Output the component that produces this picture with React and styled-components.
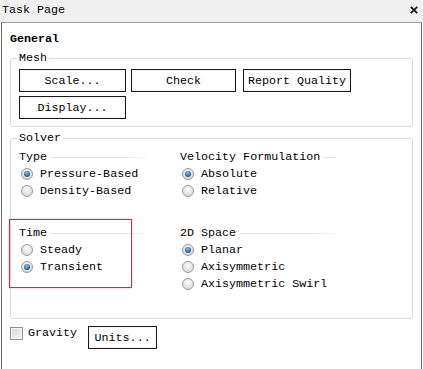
import React from "react";
import styled, { createGlobalStyle } from "styled-components";

const GlobalStyle = createGlobalStyle`
  html, body {
    margin: 0;
    padding: 0;
    background: #ffffff;
  }
  body {
    font-family: "Liberation Mono", "DejaVu Sans Mono", monospace;
    font-size: 11.7px;
    color: #000;
  }
`;

const Window = styled.div`
  width: 423px;
  height: 369px;
  overflow: hidden;
  display: flex;
  flex-direction: column;
  background: #ffffff;
`;

const TitleBar = styled.div`
  height: 22px;
  flex-shrink: 0;
  box-sizing: border-box;
  padding: 0 5px 2px 2px;
  background: #f0f0f0;
  display: flex;
  align-items: center;
  justify-content: space-between;
  line-height: 16px;
`;

const CloseIcon = () => (
  <svg width="8" height="8" viewBox="0 0 8 8">
    <path d="M0.8 0.8 L7.2 7.2 M7.2 0.8 L0.8 7.2" stroke="#111" strokeWidth="1.7" />
  </svg>
);

const Panel = styled.div`
  flex: 1;
  margin: 0 1px;
  border-top: 1px solid #a0a0a0;
  border-left: 1px solid #6e6e6e;
  border-right: 1px solid #6e6e6e;
  padding: 8px 8px 0 8px;
  display: flex;
  flex-direction: column;
  line-height: 16px;
`;

const Heading = styled.div`
  font-weight: bold;
  height: 16px;
`;

const Group = styled.fieldset`
  margin: ${(p) => p.$top || 0}px 0 0 0;
  padding: 3px 8px ${(p) => p.$bottom || 7}px 8px;
  border: 1px solid #d9d9d9;
  border-radius: 3px;
  min-width: 0;

  legend {
    padding: 0 2px;
    margin-left: -2px;
    line-height: 16px;
  }
`;

const ButtonGrid = styled.div`
  display: grid;
  grid-template-columns: 112px 112px 108px;
  row-gap: 4px;
  justify-items: start;
`;

const Button = styled.button`
  width: ${(p) => p.$width}px;
  height: 23px;
  box-sizing: border-box;
  border: 1px solid #1a1a1a;
  box-shadow: inset 0 0 0 1px #f2f2f2;
  background: #ffffff;
  font: inherit;
  color: #000;
  padding: 0;
  line-height: 16px;
  cursor: default;
`;

const Columns = styled.div`
  display: grid;
  grid-template-columns: 161px 1fr;
`;

const Column = styled.div`
  display: flex;
  flex-direction: column;
  gap: 26px;
`;

const SubGroup = styled.div`
  position: relative;
  display: flex;
  flex-direction: column;
`;

const SubHeader = styled.div`
  width: ${(p) => p.$width}px;
  height: 16px;
  display: flex;
  align-items: center;
  gap: 4px;
  white-space: nowrap;

  &::after {
    content: "";
    flex: 1;
    height: 1px;
    background: linear-gradient(to right, #e2e2e2 70%, rgba(226, 226, 226, 0.2));
  }
`;

const RadioRow = styled.div`
  height: 17px;
  display: flex;
  align-items: center;
  gap: 7px;
  padding-left: 2px;
  white-space: nowrap;
`;

const RadioDot = styled.span`
  position: relative;
  width: 12px;
  height: 12px;
  box-sizing: border-box;
  border-radius: 50%;
  border: 1px solid #9a9a9a;
  background: radial-gradient(circle at 50% 35%, #fbfbfb 0%, #e4e4e4 55%, #cfcfcf 100%);
  flex-shrink: 0;

  &::after {
    content: "";
    display: ${(p) => (p.$on ? "block" : "none")};
    position: absolute;
    left: 2px;
    top: 2px;
    width: 6px;
    height: 6px;
    border-radius: 50%;
    background: radial-gradient(circle at 45% 35%, #8cc4ea 0%, #2f6f9f 55%, #17405f 100%);
  }
`;

const Highlight = styled.div`
  position: absolute;
  left: -10px;
  top: -6px;
  width: 123px;
  height: 69px;
  box-sizing: border-box;
  border: 1px solid #b23a4e;
  box-shadow: 0 0 2px rgba(230, 120, 140, 0.6);
  pointer-events: none;
`;

const BottomRow = styled.div`
  margin-top: 7px;
  display: flex;
  align-items: flex-start;
`;

const CheckBox = styled.span`
  width: 13px;
  height: 13px;
  margin-top: 1px;
  box-sizing: border-box;
  border: 1px solid #8f8f8f;
  background: linear-gradient(135deg, #d8d8d8, #f4f4f4);
  box-shadow: inset 0 0 0 1px #f6f6f6;
`;

const CheckLabel = styled.span`
  margin-left: 5px;
  margin-right: 11px;
  line-height: 14px;
`;

function Radio({ on, children }) {
  return (
    <RadioRow>
      <RadioDot $on={on} />
      {children}
    </RadioRow>
  );
}

export default function App() {
  return (
    <Window>
      <GlobalStyle />
      <TitleBar>
        <span>Task Page</span>
        <CloseIcon />
      </TitleBar>
      <Panel>
        <Heading>General</Heading>
        <Group $top={3}>
          <legend>Mesh</legend>
          <ButtonGrid>
            <Button $width={107}>Scale...</Button>
            <Button $width={105}>Check</Button>
            <Button $width={108}>Report Quality</Button>
            <Button $width={107}>Display...</Button>
          </ButtonGrid>
        </Group>
        <Group $top={3} $bottom={26}>
          <legend>Solver</legend>
          <Columns>
            <Column>
              <SubGroup>
                <SubHeader $width={129}>Type</SubHeader>
                <Radio on>Pressure-Based</Radio>
                <Radio>Density-Based</Radio>
              </SubGroup>
              <SubGroup>
                <SubHeader $width={129}>Time</SubHeader>
                <Radio>Steady</Radio>
                <Radio on>Transient</Radio>
                <Highlight />
              </SubGroup>
            </Column>
            <Column>
              <SubGroup>
                <SubHeader $width={158}>Velocity Formulation</SubHeader>
                <Radio on>Absolute</Radio>
                <Radio>Relative</Radio>
              </SubGroup>
              <SubGroup>
                <SubHeader $width={158}>2D Space</SubHeader>
                <Radio on>Planar</Radio>
                <Radio>Axisymmetric</Radio>
                <Radio>Axisymmetric Swirl</Radio>
              </SubGroup>
            </Column>
          </Columns>
        </Group>
        <BottomRow>
          <CheckBox />
          <CheckLabel>Gravity</CheckLabel>
          <Button $width={69}>Units...</Button>
        </BottomRow>
      </Panel>
    </Window>
  );
}
